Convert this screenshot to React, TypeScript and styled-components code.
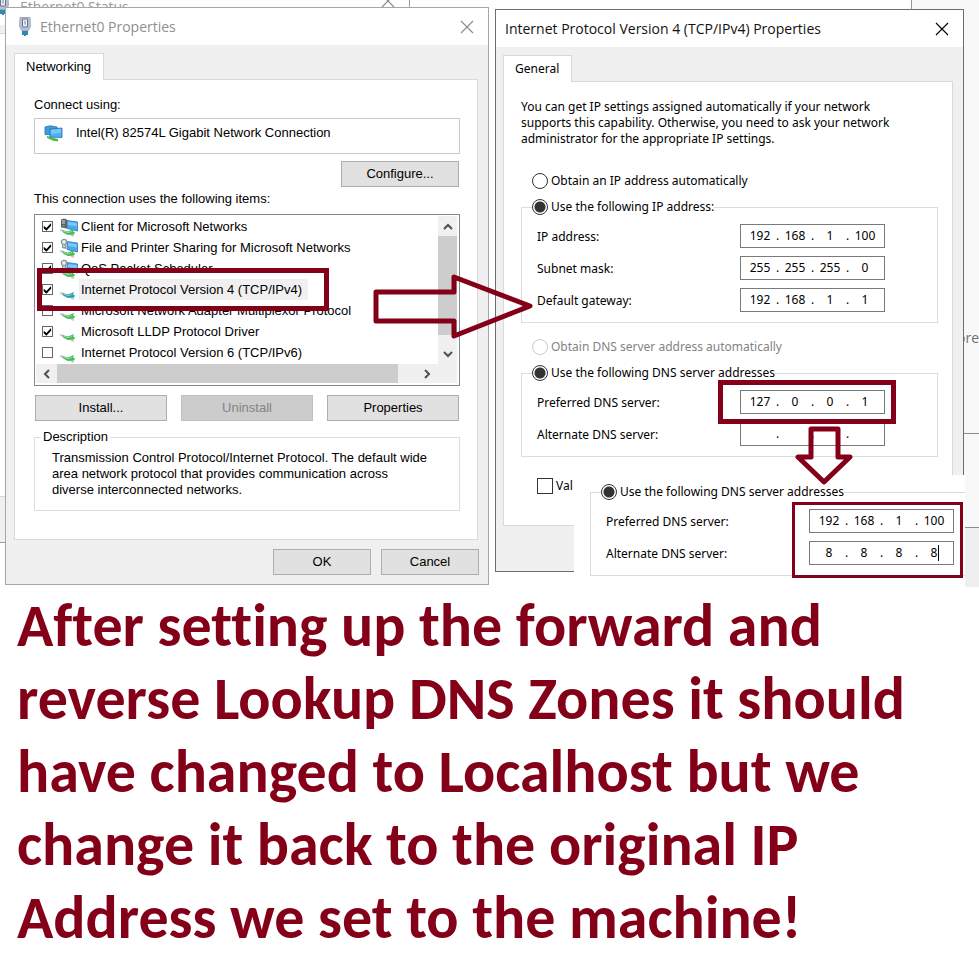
import React from 'react';
import styled, { createGlobalStyle } from 'styled-components';

const MAROON = '#830018';
const UI = '"Liberation Sans", Arial, sans-serif';
const DIALOG = '"Noto Sans", Tahoma, sans-serif';
const TITLE = '"Open Sans", "Segoe UI", sans-serif';

const Global = createGlobalStyle`
  * { box-sizing: border-box; }
  body { margin: 0; background: #fff; overflow-x: hidden; }
  button, input { font: inherit; color: inherit; margin: 0; }
`;

const Desktop = styled.main`
  position: relative;
  display: grid;
  grid-template-columns: 484fr 469fr;
  align-items: start;
  gap: 6px;
  padding: 7px 15px 4px 5px;
`;

/* Windows partly hidden behind the two dialogs */
const StatusTop = styled.div`
  position: absolute;
  left: 0;
  top: 0;
  width: 410px;
  height: 8px;
  overflow: hidden;
  border-right: 1px solid #999;
  color: #9a9a9a;
  font: 14px/14px ${TITLE};
  padding-left: 20px;
  > svg:first-child { position: absolute; left: -4px; top: -5px; }
  > svg:last-child { position: absolute; right: 14px; top: -6px; }
`;
const StatusEdge = styled.div`
  position: absolute;
  left: 0;
  top: 25px;
  width: 5px;
  height: 518px;
  border-bottom: 1px solid #999;
  background: linear-gradient(#f0f0f0 8px, #d9d9d9 8px 9px, #fff 9px 471px, #d9d9d9 471px 472px, #f0f0f0 472px);
`;
const StatusIconTail = styled.div`
  position: absolute;
  left: 0;
  top: 7px;
  width: 5px;
  height: 10px;
  overflow: hidden;
  > svg { position: absolute; left: -4px; top: -12px; }
`;
const SettingsPane = styled.aside`
  position: absolute;
  right: 0;
  top: 0;
  width: 68px;
  height: 587px;
  overflow: hidden;
  border-left: 1px solid #999;
  background: linear-gradient(#f8f8f8 433px, #8c8c8c 433px 434px, #f8f8f8 434px 527px, #8c8c8c 527px 528px, #efefef 528px);
  color: #707070;
  font: 14px/20px ${TITLE};
  padding: 328px 0 0;
  text-align: right;
`;

const Dialog = styled.section<{ $active?: boolean }>`
  position: relative;
  border: 1px solid ${p => (p.$active ? '#6d6d6d' : '#a6a6a6')};
  background: #f0f0f0;
  color: #000;
  margin-top: ${p => (p.$active ? 2 : 0)}px;
  z-index: ${p => (p.$active ? 1 : 2)};
  font: ${p => (p.$active ? `12px/16px ${DIALOG}` : `13px/16px ${UI}`)};
`;
const TitleBar = styled.header<{ $active?: boolean }>`
  display: flex;
  align-items: center;
  gap: 8px;
  height: 37px;
  padding: 0 14px 0 ${p => (p.$active ? 9 : 12)}px;
  background: #fff;
  color: ${p => (p.$active ? '#111' : '#8f8f8f')};
`;
const Title = styled.h2`
  flex: 1;
  margin: 0;
  font: 14px/20px ${TITLE};
`;
const CloseButton = styled.button`
  display: flex;
  padding: 0;
  border: 0;
  background: none;
`;
const Body = styled.div<{ $active?: boolean }>`
  padding: 8px 10px ${p => (p.$active ? 45 : 9)}px ${p => (p.$active ? 7 : 8)}px;
`;
const Tab = styled.button`
  display: block;
  position: relative;
  z-index: 1;
  height: 27px;
  padding: 0 12px 0 11px;
  margin: 0 0 -1px;
  border: 1px solid #d9d9d9;
  border-bottom: 0;
  background: #fff;
`;
const Page = styled.div<{ $active?: boolean }>`
  border: 1px solid #d9d9d9;
  background: #fff;
  padding: ${p => (p.$active ? '17px 14px 22px 17px' : '17px 17px 28px 19px')};
`;

const Adapter = styled.div`
  display: flex;
  align-items: flex-start;
  gap: 12px;
  height: 36px;
  margin-top: 5px;
  padding: 6px 9px;
  border: 1px solid #c8c8c8;
`;
const PushButton = styled.button`
  height: 26px;
  padding: 0 8px;
  border: 1px solid #adadad;
  background: #e1e1e1;
  &:disabled { background: #ccc; border-color: #bfbfbf; color: #838383; }
`;
const ConfigureRow = styled.div`
  display: flex;
  justify-content: flex-end;
  margin: 7px 1px 4px;
  > button { width: 118px; }
`;
const ButtonGrid = styled.div`
  display: grid;
  grid-template-columns: repeat(3, 1fr);
  gap: 14px;
  margin: 9px 1px 8px;
`;
const Footer = styled.footer`
  display: flex;
  justify-content: flex-end;
  gap: 10px;
  margin: 9px -1px 0 0;
  > button { width: 98px; }
`;

const ListBox = styled.div`
  display: grid;
  grid-template-columns: 1fr 19px;
  margin-top: 7px;
  padding: 1px 2px 2px 1px;
  border: 1px solid #828790;
`;
const Items = styled.ul`
  list-style: none;
  margin: 0;
  padding: 0 0 1px;
`;
const Item = styled.li`
  position: relative;
  display: flex;
  align-items: center;
  height: 21px;
  padding-left: 6px;
  > svg { margin: 0 1px 0 7px; flex: none; }
`;
const ItemLabel = styled.label<{ $selected?: boolean }>`
  padding: 0 6px 0 2px;
  line-height: 21px;
  white-space: nowrap;
  background: ${p => (p.$selected ? '#f0f0f0' : 'transparent')};
`;
const CheckBox = styled.input.attrs({ type: 'checkbox' })<{ $large?: boolean }>`
  appearance: none;
  flex: none;
  position: relative;
  width: ${p => (p.$large ? 16 : 11)}px;
  height: ${p => (p.$large ? 16 : 11)}px;
  border: 1px solid ${p => (p.$large ? '#333' : '#666')};
  background: #fff;
  &:checked::after {
    content: '';
    position: absolute;
    inset: 0;
    background: #000;
    clip-path: polygon(8% 42%, 38% 66%, 90% 10%, 90% 42%, 38% 98%, 8% 70%);
  }
`;
const VScroll = styled.div`
  display: flex;
  flex-direction: column;
  background: #f0f0f0;
`;
const HScroll = styled.div`
  grid-column: 1 / -1;
  display: flex;
  height: 19px;
  padding-right: 20px;
  background: #f0f0f0;
`;
const ScrollButton = styled.button`
  display: grid;
  place-items: center;
  flex: none;
  min-width: 19px;
  height: 20px;
  padding: 0;
  border: 0;
  background: none;
  ${HScroll} & { width: 21px; height: 19px; }
`;
const Thumb = styled.div<{ $rest: number }>`
  flex: 1;
  background: #cdcdcd;
  ${VScroll} & { margin-bottom: ${p => p.$rest}px; }
  ${HScroll} & { margin-right: ${p => p.$rest}px; }
`;

const Description = styled.fieldset`
  margin: 0;
  padding: 5px 17px 12px;
  border: 1px solid #dcdcdc;
  min-width: 0;
  > legend { margin-left: -11px; padding: 0 2px; }
`;
const Text = styled.p`
  margin: 0;
`;

const Option = styled.label<{ $top?: number; $disabled?: boolean; $indent?: number }>`
  display: flex;
  align-items: center;
  gap: 3px;
  height: 18px;
  margin: ${p => p.$top ?? 0}px 0 8px ${p => p.$indent ?? 11}px;
  color: ${p => (p.$disabled ? '#838383' : 'inherit')};
  white-space: nowrap;
`;
const Radio = styled.input.attrs({ type: 'radio' })`
  appearance: none;
  flex: none;
  width: 16px;
  height: 16px;
  border: 1px solid #333;
  border-radius: 50%;
  background: #fff;
  &:checked { background: radial-gradient(circle, #333 5px, #fff 6px); }
  &:disabled { border-color: #ccc; }
`;
const Group = styled.fieldset`
  min-width: 0;
  margin: 0;
  padding: 8px 52px 10px 15px;
  border: 1px solid #dcdcdc;
  > legend { padding: 0; margin-left: -5px; }
  > legend > label { margin: 0; }
`;
const Field = styled.div`
  display: flex;
  align-items: center;
  justify-content: space-between;
  height: 24px;
  > label { padding-top: 2px; }
  & + & { margin-top: 8px; }
`;
const IpBox = styled.div`
  position: relative;
  display: flex;
  width: 145px;
  height: 24px;
  padding-left: 6px;
  border: 1px solid #7a7a7a;
  background: #fff;
  line-height: 22px;
`;
const Octet = styled.input`
  width: 26px;
  height: 22px;
  padding: 0;
  border: 0;
  outline: 0;
  background: none;
  text-align: center;
`;
const Dot = styled.span`
  width: 9px;
  text-align: center;
`;
const Caret = styled.i`
  position: absolute;
  right: 14px;
  top: 3px;
  width: 1px;
  height: 16px;
  background: #000;
`;

/* Frames and arrows laid over the controls */
const Marker = styled.span<{ $thin?: boolean }>`
  position: absolute;
  z-index: 3;
  border: ${p => (p.$thin ? 3 : 5)}px solid ${MAROON};
  pointer-events: none;
`;
const ItemMarker = styled(Marker)`
  inset: -11px auto -11px 1px;
  width: 292px;
`;
const FieldMarker = styled(Marker)`
  inset: -11px -12px -11px -23px;
`;
const InsetMarker = styled(Marker)`
  inset: 27px 2px 9px 218px;
`;
const ArrowRight = styled.svg`
  position: absolute;
  left: 364px;
  top: 262px;
  z-index: 5;
  pointer-events: none;
`;
const ArrowDown = styled.svg`
  position: absolute;
  left: 299px;
  top: 414px;
  z-index: 5;
  pointer-events: none;
`;
const Inset = styled.div`
  position: absolute;
  left: 78px;
  top: 465px;
  z-index: 4;
  width: 391px;
  height: 112px;
  padding: 8px 0 0 16px;
  background: #fff;
  > fieldset { padding-right: 11px; border-right: 0; }
`;

const Caption = styled.h1`
  max-width: 960px;
  margin: 0;
  padding: 0 17px;
  color: ${MAROON};
  font: bold 60px/73px Carlito, Calibri, Lato, sans-serif;
  font-variant-ligatures: none;
`;

const Cross = ({ color = '#000' }: { color?: string }) => (
  <svg width="14" height="14" viewBox="0 0 14 14" stroke={color} fill="none" strokeWidth="1.1">
    <path d="M1 1 13 13M13 1 1 13" />
  </svg>
);

const PlugIcon = () => (
  <svg width="14" height="21" viewBox="0 0 14 21">
    <path d="M5 14v5M7 14v6M9 14v5" stroke="#2f89b5" strokeWidth="2" />
    <path d="M2 1.500h10l.4 9-2 4H3.600L1.600 10.500z" fill="#b9c2d3" stroke="#a0a9bc" />
    <path d="M4.500 3h5v8h-5z" fill="#e9edf5" stroke="#69758e" />
    <path d="M6 4.500h2v4H6z" fill="#b4bed0" />
  </svg>
);

const AdapterIcon = () => (
  <svg width="20" height="17" viewBox="0 0 20 17">
    <path d="M3 11 14 14v2.500L9 15.700 3 13z" fill="#4dbb4f" />
    <path d="M1 2 6 .8 13 2v8L1 9.500z" fill="#3e9fe0" stroke="#2c6fa3" strokeWidth=".8" />
    <path d="M6 4 18 3v9.500L6 12z" fill="#4db1f2" stroke="#2c6fa3" strokeWidth=".8" />
    <path d="M7 5 17 4v3.500L7 9z" fill="#79c8f8" />
  </svg>
);

type Kind = 'client' | 'service' | 'protocol' | 'selected';

const Cable = ({ color = '#45bd55' }: { color?: string }) => (
  <g>
    <path d="M0 13 4 14M11 18 14 19" stroke="#c8cdd2" strokeWidth="2" />
    <path d="M2 13 8 14.500 14 12 13 14.500 15 15.500 14 17.500 8 18 3 15.500z" fill={color} />
    <path d="M3 14 8 15.700 12 14.500" stroke="#fff" strokeOpacity=".4" fill="none" />
  </g>
);

const ItemIcon = ({ kind }: { kind: Kind }) => (
  <svg width="18" height="20" viewBox="0 0 18 20">
    {(kind === 'client' || kind === 'service') && (
      <g>
        <path d="M7 3.500 17.500 5v9L7 11.500z" fill="#4aa9ee" stroke="#2f79b3" strokeWidth=".8" />
        <path d="M8 5 17 6.300v3L8 8z" fill="#7cc8f7" />
      </g>
    )}
    {kind === 'client' && (
      <g>
        <path d="M1 2.500 4 1.500 7 2.500v9L1 10.500z" fill="#5d6468" />
        <path d="M2 4h3M2 6h3" stroke="#d7dcdf" />
        <path d="M2.500 9h2" stroke="#5fd06a" />
      </g>
    )}
    {kind === 'service' && (
      <g>
        <path d="M2 4 6 4.500V11L2 10z" fill="#8f989e" />
        <circle cx="4" cy="4" r="2.600" fill="#e9edef" stroke="#8b949a" strokeWidth="1.400" />
        <path d="M3 8h2" stroke="#fff" />
      </g>
    )}
    <Cable color={kind === 'selected' ? '#2b9fae' : undefined} />
  </svg>
);

const CHEVRONS = {
  up: 'M2 9 6 5 10 9',
  down: 'M2 4 6 8 10 4',
  left: 'M8 2 4 6 8 10',
  right: 'M4 2 8 6 4 10',
};
const Scroll = ({ to }: { to: keyof typeof CHEVRONS }) => (
  <ScrollButton type="button" aria-label={`Scroll ${to}`}>
    <svg width="12" height="12" viewBox="0 0 12 12" fill="none" stroke="#505050" strokeWidth="2">
      <path d={CHEVRONS[to]} />
    </svg>
  </ScrollButton>
);

const ITEMS: { name: string; kind: Kind; on: boolean }[] = [
  { name: 'Client for Microsoft Networks', kind: 'client', on: true },
  { name: 'File and Printer Sharing for Microsoft Networks', kind: 'service', on: true },
  { name: 'QoS Packet Scheduler', kind: 'service', on: true },
  { name: 'Internet Protocol Version 4 (TCP/IPv4)', kind: 'selected', on: true },
  { name: 'Microsoft Network Adapter Multiplexor Protocol', kind: 'protocol', on: false },
  { name: 'Microsoft LLDP Protocol Driver', kind: 'protocol', on: true },
  { name: 'Internet Protocol Version 6 (TCP/IPv6)', kind: 'protocol', on: false },
];

type IpProps = { id: string; label: string; value: string; marked?: boolean; caret?: boolean };
const IpField = ({ id, label, value, marked, caret }: IpProps) => (
  <Field>
    <label htmlFor={id}>{label}</label>
    <IpBox>
      {value.split('.').map((part, i) => (
        <React.Fragment key={i}>
          {i > 0 && <Dot>.</Dot>}
          <Octet id={i === 0 ? id : undefined} aria-label={i ? `${label} part ${i + 1}` : undefined} defaultValue={part} />
        </React.Fragment>
      ))}
      {caret && <Caret />}
      {marked && <FieldMarker />}
    </IpBox>
  </Field>
);

const EthernetDialog = () => (
  <Dialog>
    <TitleBar>
      <PlugIcon />
      <Title>Ethernet0 Properties</Title>
      <CloseButton type="button" aria-label="Close"><Cross color="#8a8a8a" /></CloseButton>
    </TitleBar>
    <Body>
      <Tab type="button">Networking</Tab>
      <Page>
        <Text>Connect using:</Text>
        <Adapter><AdapterIcon />Intel(R) 82574L Gigabit Network Connection</Adapter>
        <ConfigureRow><PushButton type="button">Configure...</PushButton></ConfigureRow>
        <Text>This connection uses the following items:</Text>
        <ListBox>
          <Items>
            {ITEMS.map((item, i) => (
              <Item key={item.name}>
                <CheckBox id={`item-${i}`} defaultChecked={item.on} />
                <ItemIcon kind={item.kind} />
                <ItemLabel htmlFor={`item-${i}`} $selected={item.kind === 'selected'}>{item.name}</ItemLabel>
                {item.kind === 'selected' && <ItemMarker />}
              </Item>
            ))}
          </Items>
          <VScroll><Scroll to="up" /><Thumb $rest={9} /><Scroll to="down" /></VScroll>
          <HScroll><Scroll to="left" /><Thumb $rest={18} /><Scroll to="right" /></HScroll>
        </ListBox>
        <ButtonGrid>
          <PushButton type="button">Install...</PushButton>
          <PushButton type="button" disabled>Uninstall</PushButton>
          <PushButton type="button">Properties</PushButton>
        </ButtonGrid>
        <Description>
          <legend>Description</legend>
          <Text>
            Transmission Control Protocol/Internet Protocol. The default wide<br />
            area network protocol that provides communication across<br />
            diverse interconnected networks.
          </Text>
        </Description>
      </Page>
      <Footer>
        <PushButton type="button">OK</PushButton>
        <PushButton type="button">Cancel</PushButton>
      </Footer>
    </Body>
    <ArrowRight width="170" height="80" viewBox="370 270 170 80" fill="none" stroke={MAROON} strokeWidth="5" strokeLinejoin="round">
      <path d="M376 292H454V277L530 306 454 336V321H376z" />
    </ArrowRight>
  </Dialog>
);

const ProtocolDialog = () => (
  <Dialog $active>
    <TitleBar $active>
      <Title>Internet Protocol Version 4 (TCP/IPv4) Properties</Title>
      <CloseButton type="button" aria-label="Close"><Cross /></CloseButton>
    </TitleBar>
    <Body $active>
      <Tab type="button">General</Tab>
      <Page $active>
        <Text>
          You can get IP settings assigned automatically if your network<br />
          supports this capability. Otherwise, you need to ask your network<br />
          administrator for the appropriate IP settings.
        </Text>
        <Option $top={25}><Radio name="ip" />Obtain an IP address automatically</Option>
        <Group>
          <legend><Option><Radio name="ip" defaultChecked />Use the following IP address:</Option></legend>
          <IpField id="ip-address" label="IP address:" value="192.168.1.100" />
          <IpField id="subnet" label="Subnet mask:" value="255.255.255.0" />
          <IpField id="gateway" label="Default gateway:" value="192.168.1.1" />
        </Group>
        <Option $top={15} $disabled><Radio name="dns" disabled />Obtain DNS server address automatically</Option>
        <Group>
          <legend><Option><Radio name="dns" defaultChecked />Use the following DNS server addresses</Option></legend>
          <IpField id="dns-1" label="Preferred DNS server:" value="127.0.0.1" marked />
          <IpField id="dns-2" label="Alternate DNS server:" value="..." />
        </Group>
        <Option $top={20} $indent={16} htmlFor="validate"><CheckBox id="validate" $large />Val</Option>
      </Page>
    </Body>
    <ArrowDown width="70" height="70" viewBox="795 424 70 70" fill="none" stroke={MAROON} strokeWidth="5" strokeLinejoin="round">
      <path d="M811 429H838V457H850L824 482 798 457H811z" />
    </ArrowDown>
    <Inset>
      <Group>
        <legend><Option><Radio name="dns-new" defaultChecked />Use the following DNS server addresses</Option></legend>
        <IpField id="new-dns-1" label="Preferred DNS server:" value="192.168.1.100" />
        <IpField id="new-dns-2" label="Alternate DNS server:" value="8.8.8.8" caret />
      </Group>
      <InsetMarker $thin />
    </Inset>
  </Dialog>
);

export default function App() {
  return (
    <>
      <Global />
      <Desktop>
        <StatusTop><PlugIcon />Ethernet0 Status<Cross color="#8a8a8a" /></StatusTop>
        <StatusIconTail><PlugIcon /></StatusIconTail>
        <StatusEdge />
        <SettingsPane>ore</SettingsPane>
        <EthernetDialog />
        <ProtocolDialog />
      </Desktop>
      <Caption>
        After setting up the forward and reverse Lookup DNS Zones it should have changed to
        Localhost but we change it back to the original IP Address we set to the machine!
      </Caption>
    </>
  );
}
